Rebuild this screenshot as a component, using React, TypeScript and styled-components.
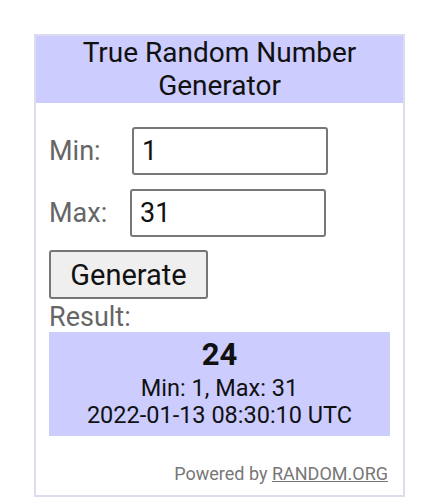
import React from 'react'
import styled, { createGlobalStyle } from 'styled-components'

const GlobalStyle = createGlobalStyle`
  body {
    margin: 0;
    background: #ffffff;
    font-family: Roboto, "Liberation Sans", Arial, sans-serif;
  }
`

const Widget = styled.div`
  margin: 34px 0 0 34px;
  width: 367px;
  border: 2px solid #dcdcee;
  background: #ffffff;
`

const Title = styled.div`
  background: #ccccff;
  color: #111111;
  text-align: center;
  font-size: 28px;
  line-height: 33px;
  padding: 0 20px 1px;
`

const Body = styled.div`
  padding: 24px 13px 9px 13px;
  display: flex;
  flex-direction: column;
`

const FieldRow = styled.div<{ $gap: number }>`
  display: flex;
  align-items: center;
  gap: ${p => p.$gap}px;
  margin-bottom: 14px;
`

const Label = styled.span`
  color: #666666;
  font-size: 27px;
  width: 60px;
`

const NumberInput = styled.input`
  box-sizing: border-box;
  width: 196px;
  height: 48px;
  border: 2px solid #777777;
  border-radius: 3px;
  padding: 0 8px;
  font-family: inherit;
  font-size: 27px;
  color: #111111;
`

const GenerateButton = styled.button`
  align-self: flex-start;
  box-sizing: border-box;
  width: 159px;
  height: 49px;
  margin-top: -1px;
  background: #efefef;
  border: 2px solid #767676;
  border-radius: 3px;
  font-family: inherit;
  font-size: 29px;
  color: #111111;
  padding: 0;
`

const ResultLabel = styled.div`
  color: #666666;
  font-size: 27px;
  line-height: 30px;
  margin-top: 3px;
`

const ResultBox = styled.div`
  background: #ccccff;
  text-align: center;
  color: #111111;
  padding: 3px 0 7px;
`

const ResultNumber = styled.div`
  font-size: 31px;
  font-weight: 700;
  line-height: 40px;
`

const ResultLine = styled.div`
  font-size: 23.5px;
  line-height: 27px;
`

const Footer = styled.div`
  margin-top: 26px;
  text-align: right;
  padding-right: 2px;
  color: #777777;
  font-size: 18px;
  line-height: 24px;
`

const FooterLink = styled.a`
  color: #777777;
  text-decoration: underline;
`

export default function App() {
  return (
    <>
      <GlobalStyle />
      <Widget>
        <Title>True Random Number Generator</Title>
        <Body>
          <FieldRow $gap={23}>
            <Label>Min:</Label>
            <NumberInput defaultValue="1" />
          </FieldRow>
          <FieldRow $gap={21}>
            <Label>Max:</Label>
            <NumberInput defaultValue="31" />
          </FieldRow>
          <GenerateButton>Generate</GenerateButton>
          <ResultLabel>Result:</ResultLabel>
          <ResultBox>
            <ResultNumber>24</ResultNumber>
            <ResultLine>Min: 1, Max: 31</ResultLine>
            <ResultLine>2022-01-13 08:30:10 UTC</ResultLine>
          </ResultBox>
          <Footer>
            Powered by <FooterLink href="#">RANDOM.ORG</FooterLink>
          </Footer>
        </Body>
      </Widget>
    </>
  )
}
